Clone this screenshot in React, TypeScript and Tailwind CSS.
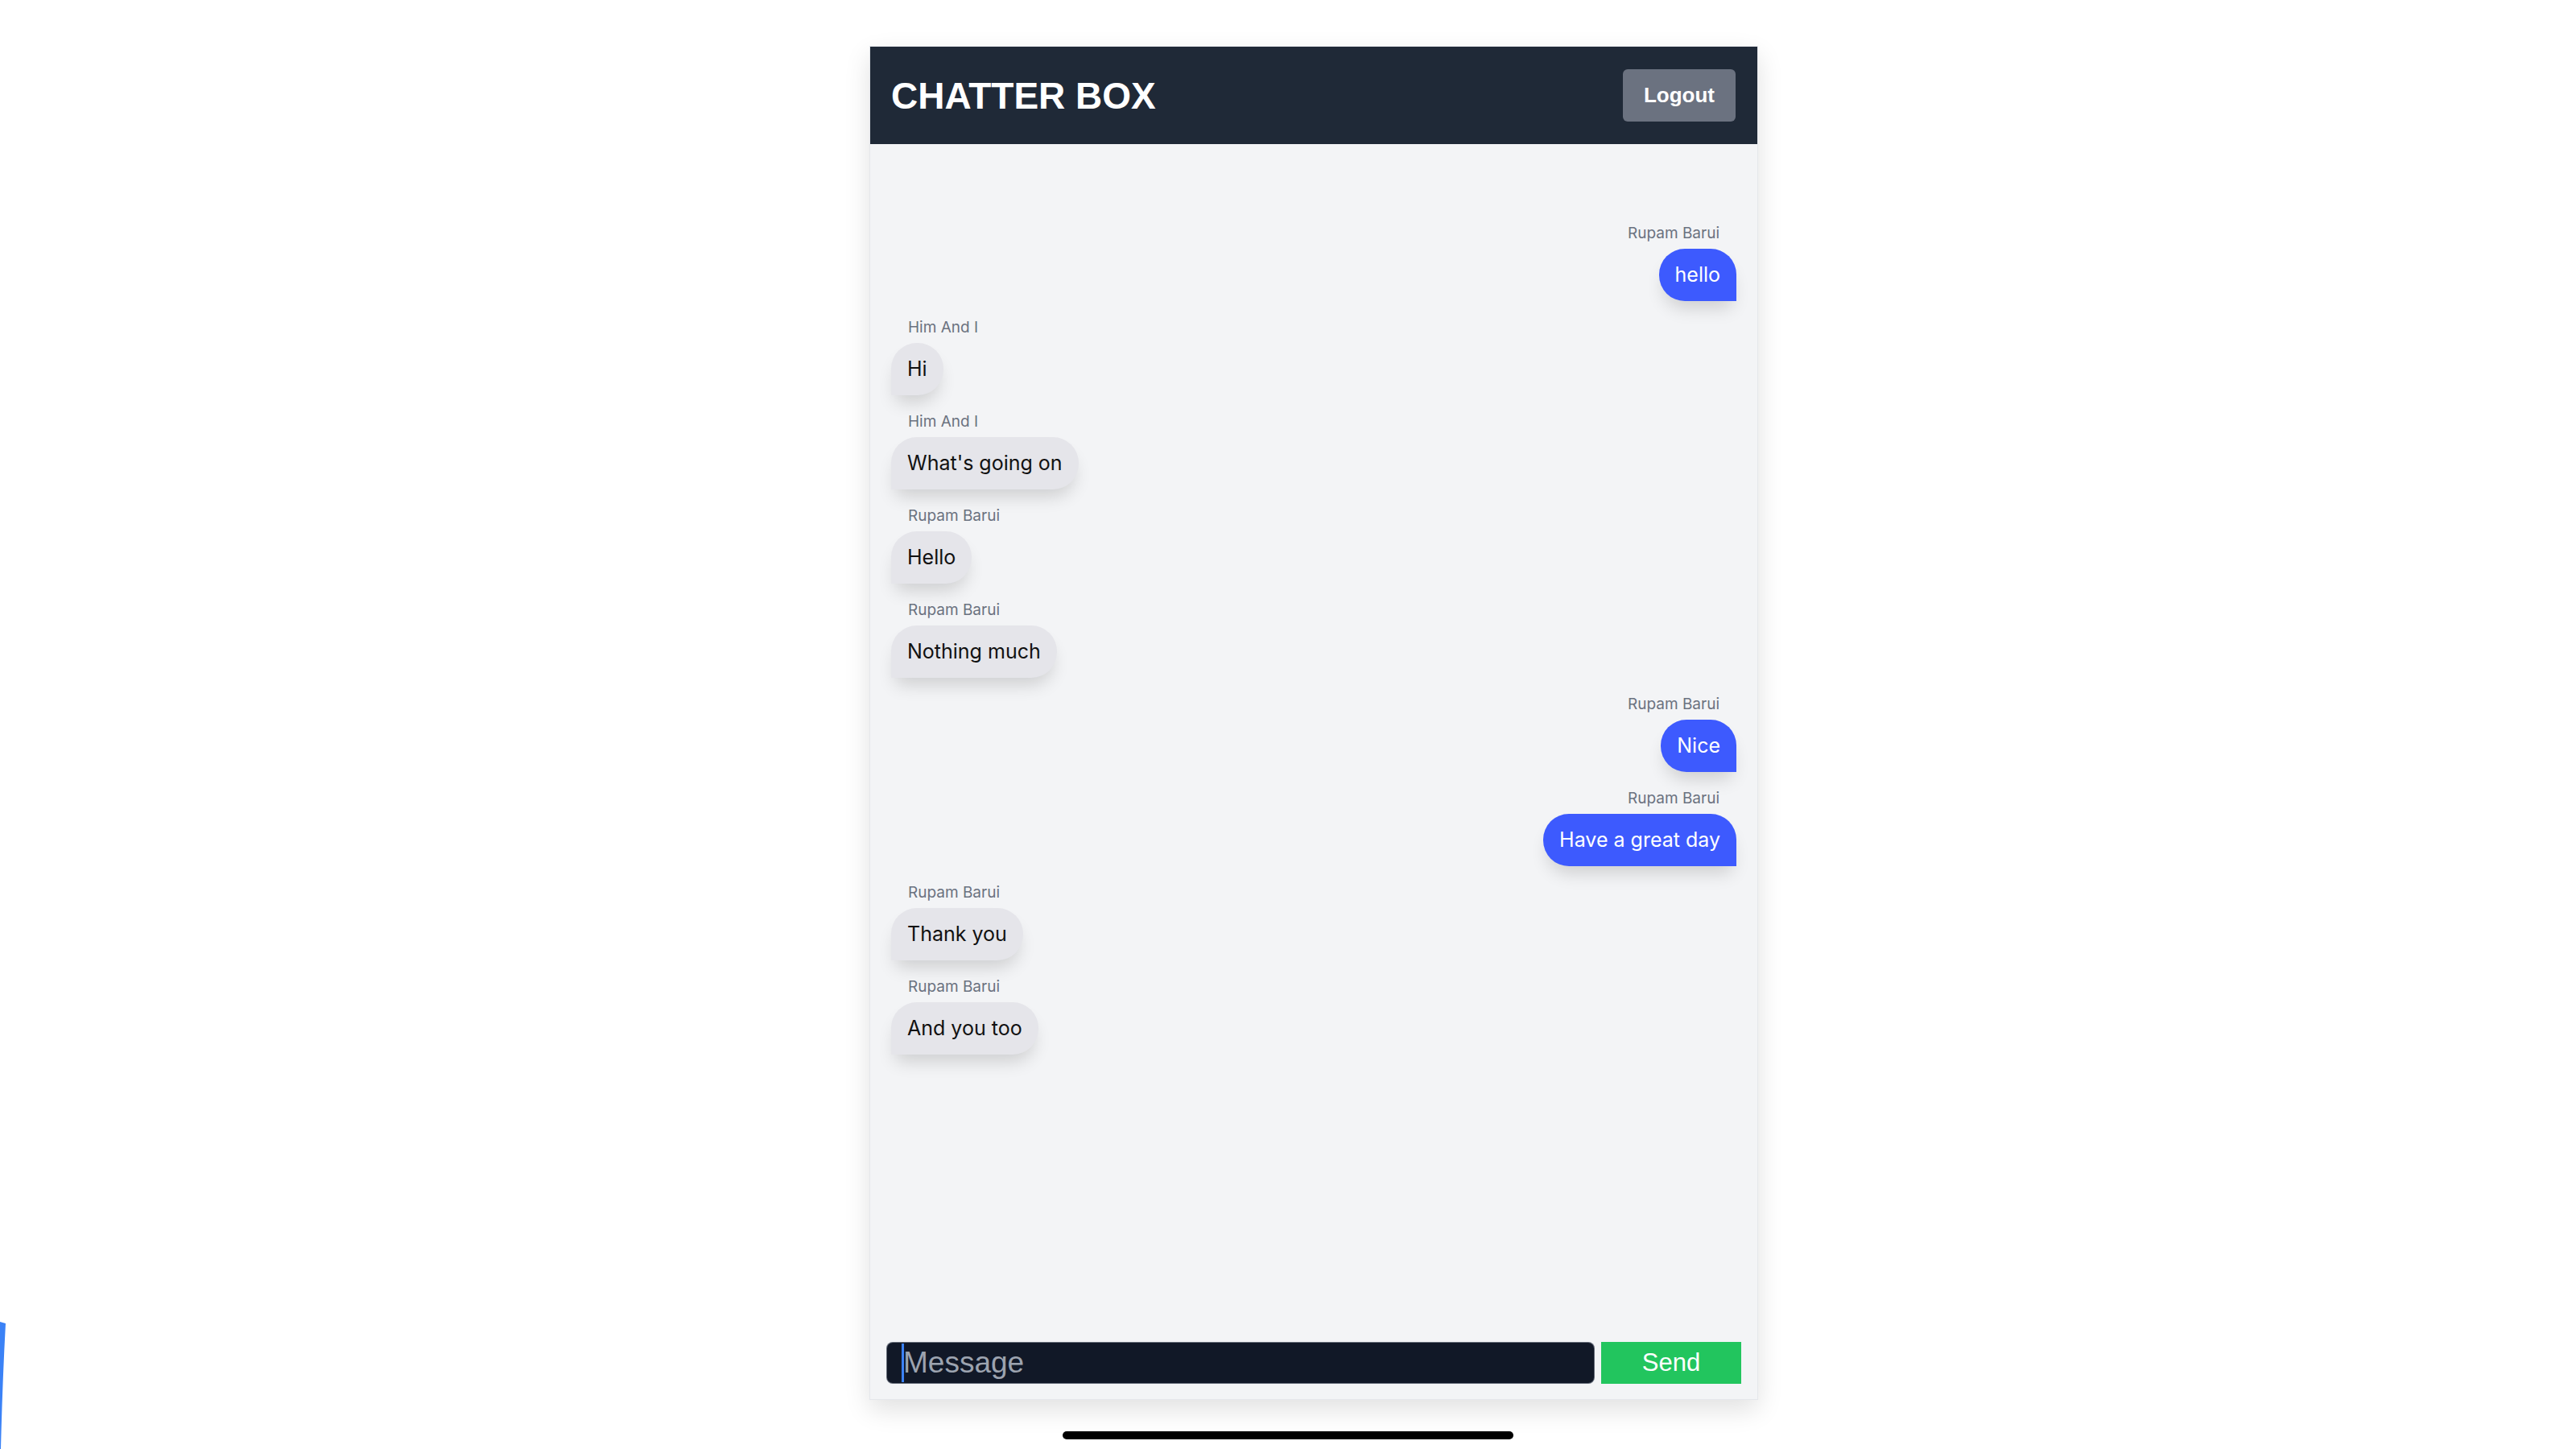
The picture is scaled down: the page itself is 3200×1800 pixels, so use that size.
import React from "react";

type Msg = { side: "left" | "right"; name: string; text: string };

const messages: Msg[] = [
  { side: "right", name: "Rupam Barui", text: "hello" },
  { side: "left", name: "Him And I", text: "Hi" },
  { side: "left", name: "Him And I", text: "What's going on" },
  { side: "left", name: "Rupam Barui", text: "Hello" },
  { side: "left", name: "Rupam Barui", text: "Nothing much" },
  { side: "right", name: "Rupam Barui", text: "Nice" },
  { side: "right", name: "Rupam Barui", text: "Have a great day" },
  { side: "left", name: "Rupam Barui", text: "Thank you" },
  { side: "left", name: "Rupam Barui", text: "And you too" },
];

function Bubble({ m }: { m: Msg }) {
  const right = m.side === "right";
  return (
    <div className={right ? "flex flex-col items-end" : "flex flex-col items-start"}>
      <div className="px-[21px] text-[19px] leading-[24px] text-[#6b7280] font-['Inter',sans-serif]">
        {m.name}
      </div>
      <div
        className={
          right
            ? "mt-[7px] px-[20px] py-[15px] text-[25px] leading-[35px] font-['Inter',sans-serif] bg-[#3d5afe] text-white rounded-[32px] rounded-br-none shadow-[0_14px_22px_-6px_rgba(0,0,0,0.16)]"
            : "mt-[7px] px-[20px] py-[15px] text-[25px] leading-[35px] font-['Inter',sans-serif] bg-[#e5e5ea] text-[#111111] rounded-[32px] rounded-bl-none shadow-[0_14px_22px_-6px_rgba(0,0,0,0.16)]"
        }
      >
        {m.text}
      </div>
    </div>
  );
}

export default function App() {
  return (
    <div className="relative w-full h-[1800px] bg-white overflow-hidden flex flex-col">
      <div className="ml-[1080px] mt-[57px] w-[1104px] h-[1682px] flex flex-col border border-[#e5e7eb] bg-[#f3f4f6] shadow-[0_12px_30px_rgba(0,0,0,0.12)]">
        <div className="h-[121px] shrink-0 bg-[#1f2937] flex items-center justify-between pl-[26px] pr-[27px]">
          <h1 className="text-[46px] font-bold text-white font-['Liberation_Sans',Arial,sans-serif] leading-none">
            CHATTER BOX
          </h1>
          <button className="h-[65px] px-[26px] rounded-[6px] bg-[#6b7280] text-white font-bold text-[26px] font-['Liberation_Sans',Arial,sans-serif]">
            Logout
          </button>
        </div>
        <div className="flex-1 flex flex-col gap-[21px] pt-[99px] px-[26px]">
          {messages.map((m, i) => (
            <Bubble key={i} m={m} />
          ))}
        </div>
        <div className="flex gap-[8px] px-[20px] pb-[19px]">
          <div className="relative flex-1">
            <input
              className="w-full h-[52px] rounded-[8px] border border-[#9ca3af]/60 bg-[#111827] pl-[20px] text-[37px] text-white placeholder:text-[#9ca3af] font-['Liberation_Sans',Arial,sans-serif] outline-none"
              placeholder="Message"
            />
            <div className="absolute left-[19px] top-[2px] bottom-[2px] w-[3px] bg-[#3b82f6]" />
          </div>
          <button className="w-[174px] h-[52px] bg-[#22c55e] text-white text-[31px] font-['Liberation_Sans',Arial,sans-serif]">
            Send
          </button>
        </div>
      </div>
      <div className="self-center mt-[39px] w-[560px] h-[10px] rounded-full bg-black" />
      <svg className="absolute left-0 top-[1638px]" width="12" height="162" viewBox="0 0 12 162">
        <path d="M0 4 L7 6 Q 3 80 1 162 L0 162 Z" fill="#3b82f6" />
      </svg>
    </div>
  );
}
